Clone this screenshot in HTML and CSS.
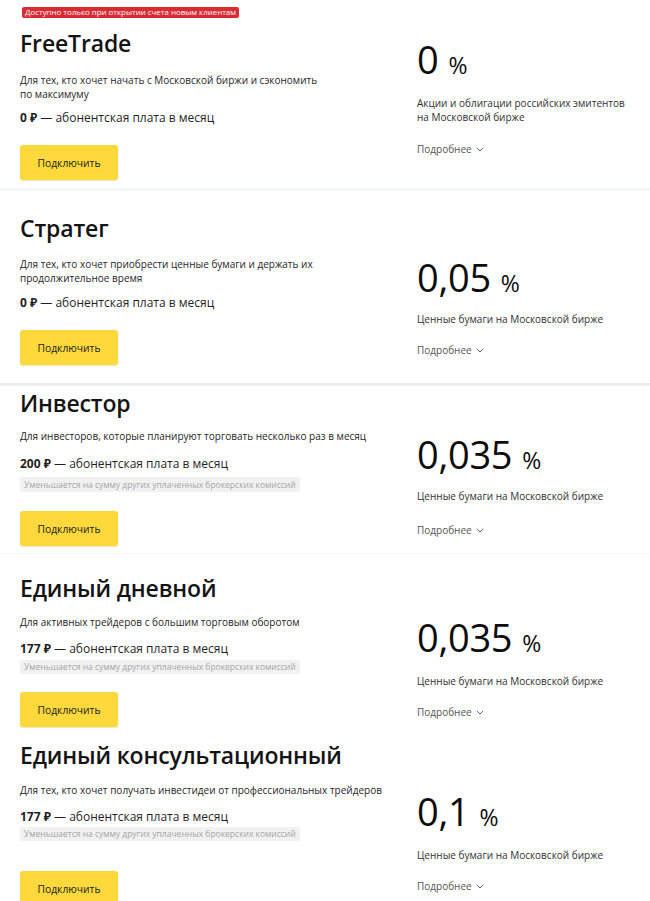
FILE: index.html
```html
<!DOCTYPE html>
<html lang="ru">
<head>
<meta charset="utf-8">
<title>Тарифы</title>
<link rel="stylesheet" href="styles.css">
</head>
<body>
<main class="page">

  <section class="plan plan-1">
    <div class="info">
      <span class="badge">Доступно только при открытии счета новым клиентам</span>
      <h2 class="title">FreeTrade</h2>
      <p class="desc">Для тех, кто хочет начать с Московской биржи и сэкономить<br>по максимуму</p>
      <p class="price"><b>0 ₽</b> — абонентская плата в месяц</p>
      <button class="btn">Подключить</button>
    </div>
    <div class="rate">
      <div class="num">0<span class="pct">%</span></div>
      <p class="rate-desc">Акции и облигации российских эмитентов<br>на Московской бирже</p>
      <a class="more">Подробнее <svg width="8" height="5" viewBox="0 0 8 5"><path d="M0.8 0.8 4 4 7.2 0.8" fill="none" stroke="#666" stroke-width="1"/></svg></a>
    </div>
  </section>

  <section class="plan plan-2">
    <div class="info">
      <h2 class="title">Стратег</h2>
      <p class="desc">Для тех, кто хочет приобрести ценные бумаги и держать их<br>продолжительное время</p>
      <p class="price"><b>0 ₽</b> — абонентская плата в месяц</p>
      <button class="btn">Подключить</button>
    </div>
    <div class="rate">
      <div class="num">0,05<span class="pct">%</span></div>
      <p class="rate-desc">Ценные бумаги на Московской бирже</p>
      <a class="more">Подробнее <svg width="8" height="5" viewBox="0 0 8 5"><path d="M0.8 0.8 4 4 7.2 0.8" fill="none" stroke="#666" stroke-width="1"/></svg></a>
    </div>
  </section>

  <section class="plan plan-3">
    <div class="info">
      <h2 class="title">Инвестор</h2>
      <p class="desc">Для инвесторов, которые планируют торговать несколько раз в месяц</p>
      <p class="price"><b>200 ₽</b> — абонентская плата в месяц</p>
      <p class="note">Уменьшается на сумму других уплаченных брокерских комиссий</p>
      <button class="btn">Подключить</button>
    </div>
    <div class="rate">
      <div class="num">0,035<span class="pct">%</span></div>
      <p class="rate-desc">Ценные бумаги на Московской бирже</p>
      <a class="more">Подробнее <svg width="8" height="5" viewBox="0 0 8 5"><path d="M0.8 0.8 4 4 7.2 0.8" fill="none" stroke="#666" stroke-width="1"/></svg></a>
    </div>
  </section>

  <section class="plan plan-4">
    <div class="info">
      <h2 class="title">Единый дневной</h2>
      <p class="desc">Для активных трейдеров с большим торговым оборотом</p>
      <p class="price"><b>177 ₽</b> — абонентская плата в месяц</p>
      <p class="note">Уменьшается на сумму других уплаченных брокерских комиссий</p>
      <button class="btn">Подключить</button>
    </div>
    <div class="rate">
      <div class="num">0,035<span class="pct">%</span></div>
      <p class="rate-desc">Ценные бумаги на Московской бирже</p>
      <a class="more">Подробнее <svg width="8" height="5" viewBox="0 0 8 5"><path d="M0.8 0.8 4 4 7.2 0.8" fill="none" stroke="#666" stroke-width="1"/></svg></a>
    </div>
  </section>

  <section class="plan plan-5">
    <div class="info">
      <h2 class="title">Единый консультационный</h2>
      <p class="desc">Для тех, кто хочет получать инвестидеи от профессиональных трейдеров</p>
      <p class="price"><b>177 ₽</b> — абонентская плата в месяц</p>
      <p class="note">Уменьшается на сумму других уплаченных брокерских комиссий</p>
      <button class="btn">Подключить</button>
    </div>
    <div class="rate">
      <div class="num">0,1<span class="pct">%</span></div>
      <p class="rate-desc">Ценные бумаги на Московской бирже</p>
      <a class="more">Подробнее <svg width="8" height="5" viewBox="0 0 8 5"><path d="M0.8 0.8 4 4 7.2 0.8" fill="none" stroke="#666" stroke-width="1"/></svg></a>
    </div>
  </section>

</main>
</body>
</html>
```

FILE: styles.css
```css
* { box-sizing: border-box; }

html, body {
  margin: 0;
  padding: 0;
  background: #fff;
  height: 901px;
  overflow: hidden;
}

body {
  font-family: "Open Sans", "Noto Sans", "DejaVu Sans", sans-serif;
  color: #1f1f1f;
}

.page {
  display: flex;
  flex-direction: column;
}

.plan {
  display: flex;
  align-items: flex-start;
}

.info {
  width: 417px;
  flex: none;
  padding-left: 20px;
  display: flex;
  flex-direction: column;
  align-items: flex-start;
}

.rate {
  flex: 1;
  display: flex;
  flex-direction: column;
  align-items: flex-start;
}

p, h2 { margin: 0; }

.badge {
  display: block;
  height: 11px;
  padding: 0 3px;
  margin-left: 2px;
  background: #d92b33;
  color: #fff;
  border-radius: 2px;
  font-size: 7.9px;
  line-height: 11px;
  white-space: nowrap;
}

.title {
  font-size: 23px;
  line-height: 28px;
  font-weight: 600;
  color: #141414;
  letter-spacing: -0.15px;
}

.desc {
  font-size: 10px;
  line-height: 14px;
  color: #262626;
}

.price {
  font-size: 12px;
  line-height: 16px;
  color: #1f1f1f;
}

.price b { font-weight: 700; }

.note {
  height: 14px;
  padding: 0 4px;
  background: #f1f1f1;
  color: #a6a6a6;
  font-size: 8.5px;
  line-height: 14px;
  border-radius: 2px;
  white-space: nowrap;
}

.btn {
  width: 98px;
  height: 35px;
  border: 0;
  border-radius: 3px;
  background: #fdd93c;
  box-shadow: 0 1px 1px rgba(180, 150, 0, 0.25);
  font-family: inherit;
  font-size: 10.3px;
  font-weight: 500;
  color: #222;
  padding: 0;
}

.num {
  height: 40px;
  font-size: 38px;
  line-height: 40px;
  font-weight: 500;
  color: #0d0d0d;
  letter-spacing: -0.3px;
  white-space: nowrap;
}

.pct {
  font-size: 23px;
  line-height: 1;
  font-weight: 500;
  margin-left: 10px;
}

.rate-desc {
  font-size: 10px;
  line-height: 14px;
  color: #303030;
}

.more {
  font-size: 10px;
  line-height: 14px;
  color: #555;
  display: flex;
  align-items: center;
  gap: 4px;
}

.more svg { margin-top: 1px; }

/* Plan 1 */
.plan-1 { padding-top: 7px; padding-bottom: 8px; border-bottom: 3px solid #f4f6f7; }
.plan-1 .title { margin-top: 11px; }
.plan-1 .desc { margin-top: 16px; }
.plan-1 .price { margin-top: 9px; }
.plan-1 .btn { margin-top: 19px; }
.plan-1 .rate { margin-top: 32px; }
.plan-1 .rate-desc { margin-top: 17px; }
.plan-1 .more { margin-top: 18px; }

/* Plan 2 */
.plan-2 { padding-top: 23px; padding-bottom: 18px; border-bottom: 3px solid #efefef; }
.plan-2 .desc { margin-top: 15px; }
.plan-2 .price { margin-top: 10px; }
.plan-2 .btn { margin-top: 19px; }
.plan-2 .rate { margin-top: 43px; }
.plan-2 .rate-desc { margin-top: 15px; }
.plan-2 .more { margin-top: 17px; }

/* Plan 3 */
.plan-3 { padding-top: 3px; padding-bottom: 7px; border-bottom: 1px solid #f6f6f6; }
.plan-3 .desc { margin-top: 12px; }
.plan-3 .price { margin-top: 13px; }
.plan-3 .note { margin-top: 5px; height: 15px; line-height: 15px; }
.plan-3 .btn { margin-top: 19px; }
.plan-3 .rate { margin-top: 45px; }
.plan-3 .rate-desc { margin-top: 15px; }
.plan-3 .more { margin-top: 20px; }

/* Plan 4 */
.plan-4 { padding-top: 20px; padding-bottom: 7px; }
.plan-4 .desc { margin-top: 13px; }
.plan-4 .price { margin-top: 12px; }
.plan-4 .note { margin-top: 3px; }
.plan-4 .btn { margin-top: 18px; }
.plan-4 .rate { margin-top: 43px; }
.plan-4 .rate-desc { margin-top: 17px; }
.plan-4 .more { margin-top: 17px; }

/* Plan 5 */
.plan-5 { padding-top: 7px; }
.plan-5 .desc { margin-top: 14px; }
.plan-5 .price { margin-top: 12px; }
.plan-5 .note { margin-top: 2px; }
.plan-5 .btn { margin-top: 30px; }
.plan-5 .rate { margin-top: 50px; }
.plan-5 .rate-desc { margin-top: 17px; }
.plan-5 .more { margin-top: 17px; }
```
